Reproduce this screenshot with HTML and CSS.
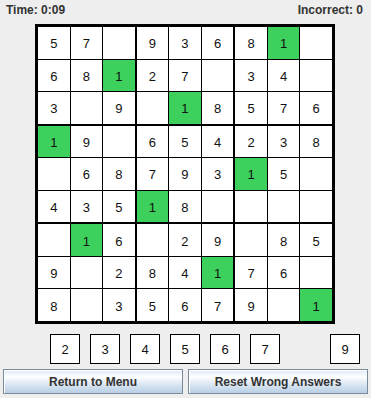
FILE: index.html
```html
<!DOCTYPE html>
<html>
<head>
<meta charset="utf-8">
<link rel="stylesheet" href="styles.css">
</head>
<body>
<div class="app">
  <div class="status">
    <span class="label">Time: 0:09</span>
    <span class="label">Incorrect: 0</span>
  </div>
  <div class="board">
    <div class="box">
      <div class="cell">5</div><div class="cell">7</div><div class="cell"></div>
      <div class="cell">6</div><div class="cell">8</div><div class="cell ok">1</div>
      <div class="cell">3</div><div class="cell"></div><div class="cell">9</div>
    </div>
    <div class="box">
      <div class="cell">9</div><div class="cell">3</div><div class="cell">6</div>
      <div class="cell">2</div><div class="cell">7</div><div class="cell"></div>
      <div class="cell"></div><div class="cell ok">1</div><div class="cell">8</div>
    </div>
    <div class="box">
      <div class="cell">8</div><div class="cell ok">1</div><div class="cell"></div>
      <div class="cell">3</div><div class="cell">4</div><div class="cell"></div>
      <div class="cell">5</div><div class="cell">7</div><div class="cell">6</div>
    </div>
    <div class="box">
      <div class="cell ok">1</div><div class="cell">9</div><div class="cell"></div>
      <div class="cell"></div><div class="cell">6</div><div class="cell">8</div>
      <div class="cell">4</div><div class="cell">3</div><div class="cell">5</div>
    </div>
    <div class="box">
      <div class="cell">6</div><div class="cell">5</div><div class="cell">4</div>
      <div class="cell">7</div><div class="cell">9</div><div class="cell">3</div>
      <div class="cell ok">1</div><div class="cell">8</div><div class="cell"></div>
    </div>
    <div class="box">
      <div class="cell">2</div><div class="cell">3</div><div class="cell">8</div>
      <div class="cell ok">1</div><div class="cell">5</div><div class="cell"></div>
      <div class="cell"></div><div class="cell"></div><div class="cell"></div>
    </div>
    <div class="box">
      <div class="cell"></div><div class="cell ok">1</div><div class="cell">6</div>
      <div class="cell">9</div><div class="cell"></div><div class="cell">2</div>
      <div class="cell">8</div><div class="cell"></div><div class="cell">3</div>
    </div>
    <div class="box">
      <div class="cell"></div><div class="cell">2</div><div class="cell">9</div>
      <div class="cell">8</div><div class="cell">4</div><div class="cell ok">1</div>
      <div class="cell">5</div><div class="cell">6</div><div class="cell">7</div>
    </div>
    <div class="box">
      <div class="cell"></div><div class="cell">8</div><div class="cell">5</div>
      <div class="cell">7</div><div class="cell">6</div><div class="cell"></div>
      <div class="cell">9</div><div class="cell"></div><div class="cell ok">1</div>
    </div>
  </div>
  <div class="picker">
    <div class="num hidden">1</div>
    <div class="num">2</div>
    <div class="num">3</div>
    <div class="num">4</div>
    <div class="num">5</div>
    <div class="num">6</div>
    <div class="num">7</div>
    <div class="num hidden">8</div>
    <div class="num">9</div>
  </div>
  <div class="actions">
    <button class="btn">Return to Menu</button>
    <button class="btn">Reset Wrong Answers</button>
  </div>
</div>
</body>
</html>
```
FILE: styles.css
```css
html, body {
  margin: 0;
  padding: 0;
  background: #eeeeee;
}

.app {
  width: 371px;
  height: 398px;
  font-family: "Liberation Sans", Arial, sans-serif;
  background: #eeeeee;
}

.status {
  display: flex;
  justify-content: space-between;
  padding: 2px 8px 0 6px;
  height: 16px;
  margin-bottom: 6px;
}

.label {
  font-size: 12px;
  font-weight: bold;
  line-height: 16px;
  color: #333333;
}

.board {
  box-sizing: border-box;
  width: 300px;
  height: 300px;
  margin-left: 35px;
  border: 3px solid #000;
  background: #000;
  display: grid;
  grid-template-columns: repeat(3, 1fr);
  grid-template-rows: repeat(3, 1fr);
  gap: 2px;
}

.box {
  display: grid;
  grid-template-columns: repeat(3, 1fr);
  grid-template-rows: repeat(3, 1fr);
  gap: 1px;
  background: #000;
}

.cell {
  background: #ffffff;
  display: flex;
  align-items: center;
  justify-content: center;
  font-size: 13px;
  color: #111111;
  padding-top: 2px;
  box-sizing: border-box;
}

.cell.ok {
  background: #3dd05c;
}

.picker {
  display: flex;
  gap: 10px;
  padding-left: 10px;
  margin-top: 10px;
  height: 30px;
}

.num {
  box-sizing: border-box;
  width: 30px;
  height: 30px;
  border: 1px solid #000;
  background: #ffffff;
  display: flex;
  align-items: center;
  justify-content: center;
  font-size: 13px;
  color: #111111;
  padding-top: 1px;
}

.num.hidden {
  visibility: hidden;
}

.actions {
  display: grid;
  grid-template-columns: 180px 180px;
  gap: 5px;
  padding: 0 3px;
  margin-top: 5px;
}

.btn {
  box-sizing: border-box;
  height: 25px;
  margin: 0;
  padding: 0;
  border: 1px solid #7a8a99;
  border-radius: 0;
  background: linear-gradient(to bottom, #dde8f3 0%, #ffffff 30%, #dde8f3 60%, #b8cfe5 100%);
  font-family: "Liberation Sans", Arial, sans-serif;
  font-size: 12px;
  font-weight: bold;
  color: #333333;
  box-shadow: inset 1px 1px 0 #ffffff;
}
```
